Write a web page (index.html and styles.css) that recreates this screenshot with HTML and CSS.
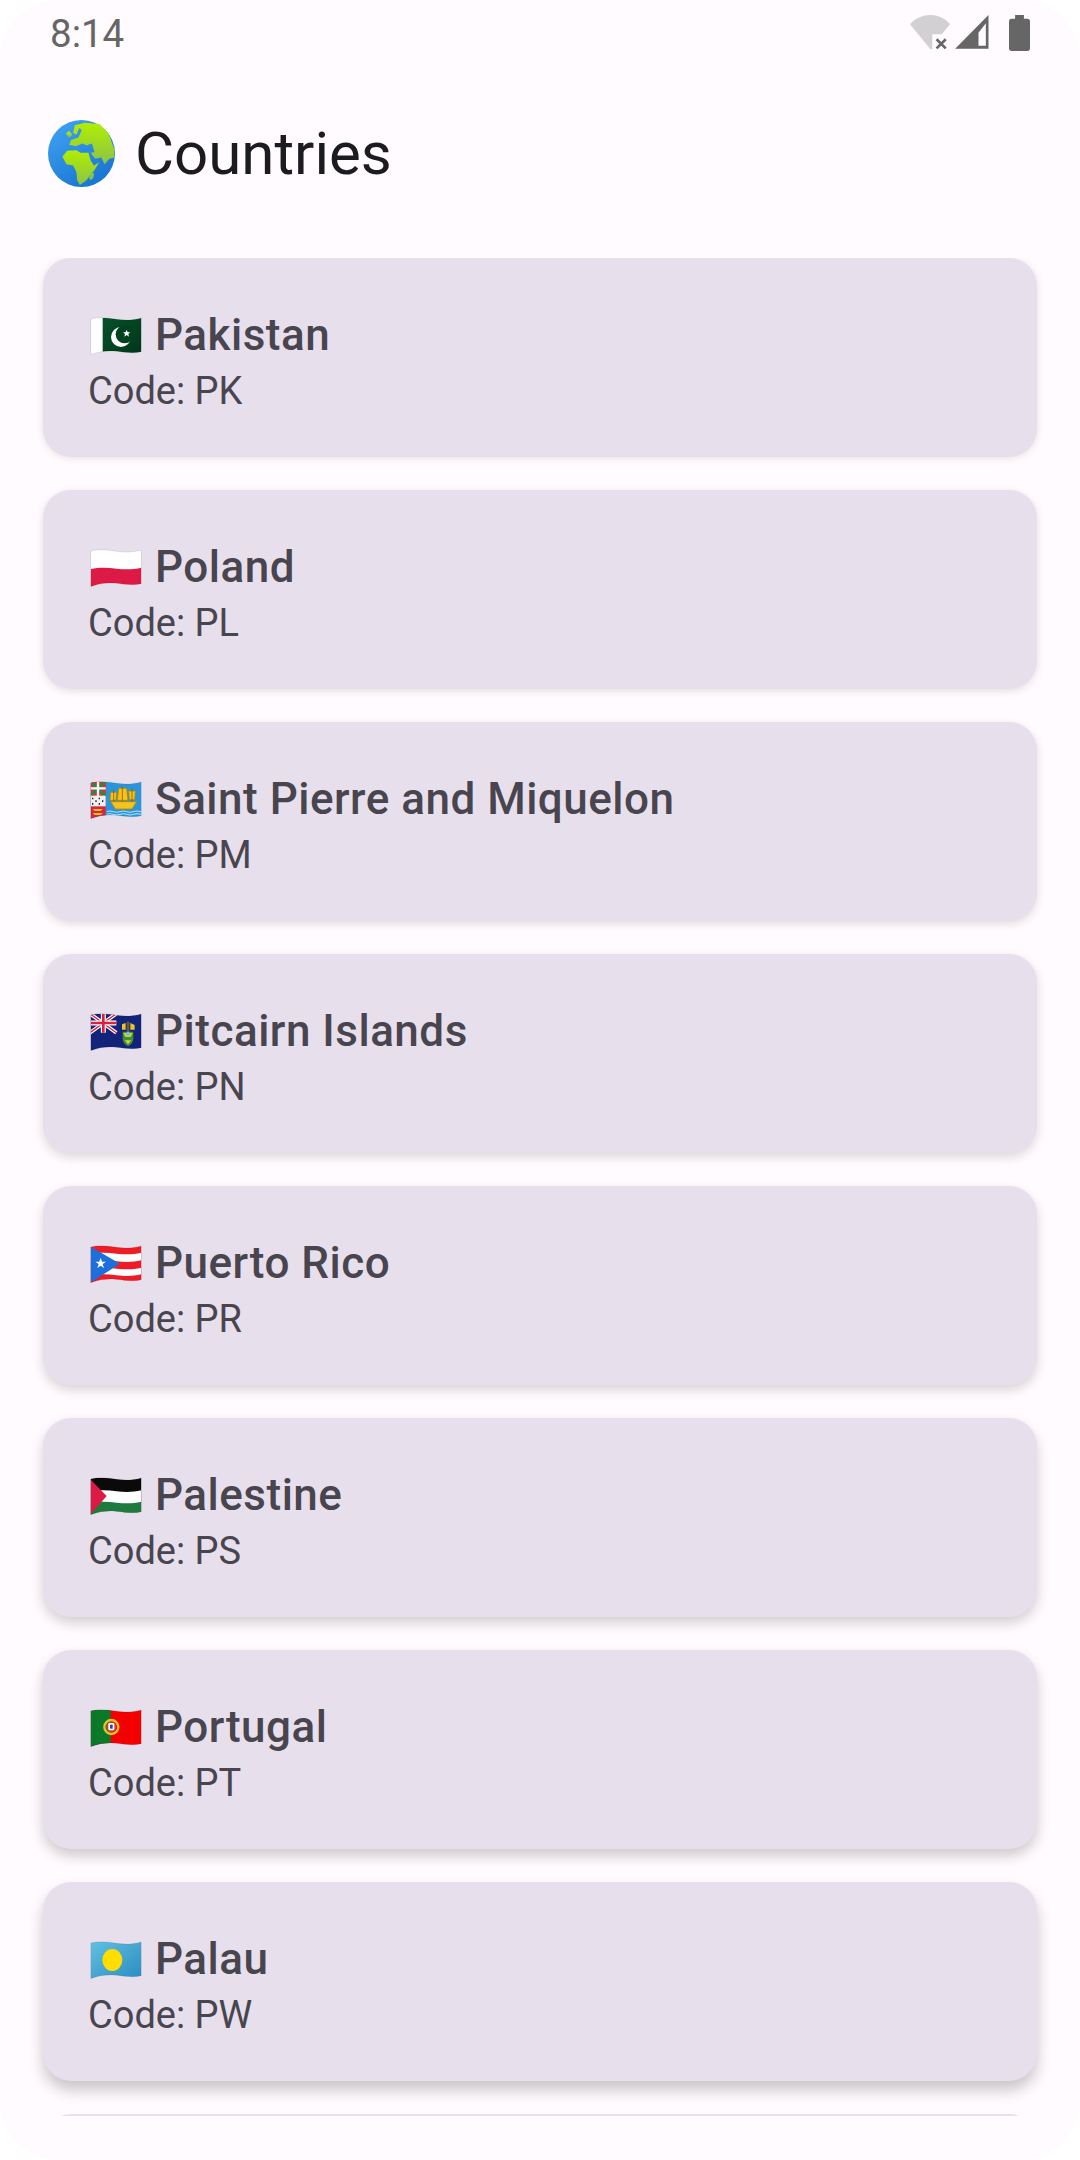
FILE: index.html
```html
<!DOCTYPE html>
<html lang="en">
<head>
<meta charset="utf-8">
<title>Countries</title>
<link rel="stylesheet" href="styles.css">
</head>
<body>
<svg class="defs" width="0" height="0" aria-hidden="true">
  <defs>
    <clipPath id="wave"><path d="M2 6C30 -1 55 3 80 7S130 10 154 3V104C130 110 105 106 80 103S30 102 2 113Z"/></clipPath>
    <path id="edge" d="M2 6C30 -1 55 3 80 7S130 10 154 3V104C130 110 105 106 80 103S30 102 2 113Z" fill="none" stroke="#000" stroke-opacity=".14" stroke-width="2"/>
    <linearGradient id="ocean" x1="0" y1="0" x2=".6" y2="1"><stop offset="0" stop-color="#42a5f5"/><stop offset="1" stop-color="#1976d2"/></linearGradient>
    <linearGradient id="land" x1="0" y1="0" x2="0" y2="1"><stop offset="0" stop-color="#b2ee00"/><stop offset="1" stop-color="#8bc34a"/></linearGradient>
    <linearGradient id="palau" x1="0" y1="0" x2="1" y2="1"><stop offset="0" stop-color="#62c1e2"/><stop offset="1" stop-color="#2a8cc2"/></linearGradient>
    <linearGradient id="pkgreen" x1="0" y1="0" x2="1" y2="1"><stop offset="0" stop-color="#06522a"/><stop offset="1" stop-color="#01351a"/></linearGradient>
  </defs>
</svg>
<div class="screen">
  <header class="status">
    <span class="clock">8:14</span>
    <div class="status-icons">
      <svg class="ic-wifi" viewBox="150 45 125 105"><path d="M150 72C185 35 240 35 272 72L247 103H218V148H212Z" fill="#d2d0d2"/><path d="M231 118L259 146M259 118L231 146" stroke="#666" stroke-width="8" fill="none"/></svg>
      <svg class="ic-cell" viewBox="285 47 101 102"><path d="M285 148L385 47V148Z" fill="#666"/><path d="M355 100L377 72V139H355Z" fill="#fffbfe"/></svg>
      <svg class="ic-batt" viewBox="448 46 62 106"><path d="M466 46H492V57H502Q510 57 510 65V144Q510 152 502 152H456Q448 152 448 144V65Q448 57 456 57H466Z" fill="#666"/></svg>
    </div>
  </header>

  <h1 class="page-title">
    <svg class="globe" viewBox="55 60 200 200">
      <circle cx="155" cy="160" r="100" fill="url(#ocean)"/>
      <path d="M135 76L165 68L208 72L236 100L253 148L253 172L238 176L224 192L214 172L196 176L182 158L194 156L186 130L170 136L158 130L138 138L118 134L124 120L146 112L156 90L148 84L140 104L130 98Z" fill="url(#land)"/>
      <path d="M108 100L118 92L128 104L118 112Z" fill="url(#land)"/>
      <path d="M98 170L112 152L140 150L152 158L176 158L182 180L192 196L208 186L192 212L180 226L170 240L150 254L142 240L140 216L130 196L110 192Z" fill="url(#land)"/>
      <ellipse cx="185" cy="228" rx="6" ry="11" fill="#8bc34a" transform="rotate(20 185 228)"/>
    </svg>
    <span>Countries</span>
  </h1>

  <main class="list">
    <article class="card">
      <div class="name">
        <svg class="flag" viewBox="0 0 156 114"><g clip-path="url(#wave)"><rect width="156" height="114" fill="#fff"/><rect x="38" width="118" height="114" fill="url(#pkgreen)"/><circle cx="93" cy="60" r="30" fill="#fff"/><circle cx="104" cy="52" r="27" fill="#03421f"/><path d="M110 38L113 46L121 46L115 51L117 59L110 54L103 59L105 51L99 46L107 46Z" fill="#fff"/></g><use href="#edge"/></svg>
        <span>Pakistan</span>
      </div>
      <p class="code">Code: PK</p>
    </article>

    <article class="card">
      <div class="name">
        <svg class="flag" viewBox="0 0 156 114"><g clip-path="url(#wave)"><rect width="156" height="114" fill="#fff"/><path d="M2 60C30 54 55 56 80 59S130 62 154 56L156 120H0Z" fill="#dc1a45"/></g><use href="#edge"/></svg>
        <span>Poland</span>
      </div>
      <p class="code">Code: PL</p>
    </article>

    <article class="card">
      <div class="name">
        <svg class="flag" viewBox="0 0 156 114"><g clip-path="url(#wave)">
          <rect width="156" height="114" fill="#2a95dc"/>
          <rect width="47" height="114" fill="#d7263d"/>
          <rect y="0" width="47" height="45" fill="#d33"/>
          <path d="M0 0L47 45M47 0L0 45" stroke="#1a8f4a" stroke-width="8"/>
          <path d="M24 0V45M0 22H47" stroke="#fff" stroke-width="7"/>
          <rect y="44" width="47" height="32" fill="#f1f1f1"/>
          <path d="M8 50v5M18 58v5M28 50v5M38 58v5M8 66v5M28 66v5" stroke="#222" stroke-width="4"/>
          <path d="M8 84H38L32 90H14ZM8 96H38L32 102H14Z" fill="#f4c020"/>
          <path d="M86 22H110L114 58H82ZM62 34H80L78 58H60ZM116 30H136L134 56H118ZM62 62H140L126 84H76Z" fill="#f6c21c" stroke="#b98600" stroke-width="2.5"/>
          <path d="M97 14V62M71 26V62M126 22V62" stroke="#8a6500" stroke-width="2.5"/>
          <path d="M50 92Q60 88 70 92T90 92T110 92T130 92T154 92M50 100Q60 96 70 100T90 100T110 100T130 100T154 100" stroke="#bfe3f7" stroke-width="3" fill="none"/>
        </g><use href="#edge"/></svg>
        <span>Saint Pierre and Miquelon</span>
      </div>
      <p class="code">Code: PM</p>
    </article>

    <article class="card">
      <div class="name">
        <svg class="flag" viewBox="0 0 156 114"><g clip-path="url(#wave)">
          <rect width="156" height="114" fill="#14237a"/>
          <path d="M0 2L79 59M79 2L0 59" stroke="#fff" stroke-width="11"/>
          <path d="M0 2L79 59M79 2L0 59" stroke="#d8213f" stroke-width="4"/>
          <path d="M40 0V59M0 30H79" stroke="#fff" stroke-width="15"/>
          <path d="M40 0V59M0 30H79" stroke="#d8213f" stroke-width="8"/>
          <path d="M98 56H130V76Q130 92 114 100Q98 92 98 76Z" fill="#3f8f3a"/>
          <rect x="110" y="26" width="8" height="40" fill="#6e5a3a"/>
          <path d="M96 34L107 30V50L96 50ZM121 30L134 36V50H121Z" fill="#e6c624"/>
          <path d="M100 60H128L122 72H106ZM104 82H124L114 94Z" fill="#d8d030"/>
          <circle cx="114" cy="62" r="6" fill="#6fc0df"/>
        </g><use href="#edge"/></svg>
        <span>Pitcairn Islands</span>
      </div>
      <p class="code">Code: PN</p>
    </article>

    <article class="card">
      <div class="name">
        <svg class="flag" viewBox="0 0 156 114"><g clip-path="url(#wave)">
          <rect width="156" height="114" fill="#ee1c25"/>
          <path d="M2 27C30 21 55 23 80 26S130 29 154 23L156 120H0Z" fill="#fff"/>
          <path d="M2 50C30 44 55 46 80 49S130 52 154 46L156 120H0Z" fill="#ee1c25"/>
          <path d="M2 72C30 66 55 68 80 71S130 74 154 68L156 120H0Z" fill="#fff"/>
          <path d="M2 92C30 86 55 88 80 91S130 94 154 88L156 120H0Z" fill="#ee1c25"/>
          <path d="M0 4L90 56L0 114Z" fill="#1e6fd9"/>
          <path d="M32 38L36 50L48 50L38 57L42 69L32 62L22 69L26 57L16 50L28 50Z" fill="#fff"/>
        </g><use href="#edge"/></svg>
        <span>Puerto Rico</span>
      </div>
      <p class="code">Code: PR</p>
    </article>

    <article class="card">
      <div class="name">
        <svg class="flag" viewBox="0 0 156 114"><g clip-path="url(#wave)">
          <rect width="156" height="114" fill="#0a0a0a"/>
          <path d="M2 44C30 38 55 40 80 43S130 46 154 40L156 120H0Z" fill="#fff"/>
          <path d="M2 78C30 72 55 74 80 77S130 80 154 74L156 120H0Z" fill="#1f7a3d"/>
          <path d="M0 6L50 57L0 114Z" fill="#dc1a45"/>
        </g><use href="#edge"/></svg>
        <span>Palestine</span>
      </div>
      <p class="code">Code: PS</p>
    </article>

    <article class="card">
      <div class="name">
        <svg class="flag" viewBox="0 0 156 114"><g clip-path="url(#wave)">
          <rect width="156" height="114" fill="#f40000"/>
          <rect width="62" height="114" fill="#0a7a2a"/>
          <circle cx="64" cy="54" r="21" fill="none" stroke="#e3c626" stroke-width="7"/>
          <circle cx="64" cy="54" r="15" fill="#e53935"/>
          <rect x="55" y="42" width="18" height="22" rx="4" fill="#fff"/>
          <rect x="60" y="47" width="8" height="12" fill="#2746a8"/>
        </g><use href="#edge"/></svg>
        <span>Portugal</span>
      </div>
      <p class="code">Code: PT</p>
    </article>

    <article class="card">
      <div class="name">
        <svg class="flag" viewBox="0 0 156 114"><g clip-path="url(#wave)">
          <rect width="156" height="114" fill="url(#palau)"/>
          <ellipse cx="67" cy="57" rx="30" ry="33" fill="#ffdd00"/>
        </g><use href="#edge"/></svg>
        <span>Palau</span>
      </div>
      <p class="code">Code: PW</p>
    </article>

    <article class="card"></article>
  </main>
</div>
</body>
</html>
```
FILE: styles.css
```css
* { box-sizing: border-box; }
html, body { margin: 0; padding: 0; background: #fff; }
body { width: 1080px; height: 2160px; overflow: hidden; font-family: Roboto, "Liberation Sans", sans-serif; }
.defs { display: block; width: 0; height: 0; }

.screen {
  width: 1080px;
  height: 2160px;
  background: #fffbfe;
  border-radius: 60px;
  display: flex;
  flex-direction: column;
}

.status {
  height: 66px;
  padding: 11px 50px 0 50px;
  display: flex;
  justify-content: space-between;
  align-items: flex-start;
  flex: none;
}
.clock { font-size: 38.5px; line-height: 46px; color: #666; }
.status-icons { display: flex; align-items: flex-start; padding-top: 4px; }
.ic-wifi { width: 41px; height: 35px; display: block; }
.ic-cell { width: 34px; height: 34px; display: block; margin-left: 4px; }
.ic-batt { width: 21px; height: 36px; display: block; margin-left: 20px; }

.page-title {
  margin: 0;
  height: 192px;
  padding: 54px 44px 0 48px;
  display: flex;
  align-items: flex-start;
  gap: 20px;
  font-size: 60px;
  line-height: 68px;
  font-weight: 400;
  color: #1c1b1f;
  flex: none;
}
.globe { width: 67px; height: 67px; display: block; flex: none; }

.list {
  height: 1858px;
  overflow: hidden;
  padding: 0 43px;
  display: flex;
  flex-direction: column;
  gap: 33px;
  flex: none;
}
.card {
  height: 199px;
  flex: none;
  padding: 49px 44px 0 45px;
  background: #e7e0ec;
  border-radius: 28px;
}
.card:nth-child(1) { box-shadow: 0 1px 9px rgba(0,0,0,.11); }
.card:nth-child(2) { box-shadow: 0 2px 9px rgba(0,0,0,.12); }
.card:nth-child(3) { box-shadow: 0 3px 10px rgba(0,0,0,.13); }
.card:nth-child(4) { box-shadow: 0 4px 11px rgba(0,0,0,.15); }
.card:nth-child(5) { box-shadow: 0 5px 12px rgba(0,0,0,.16); }
.card:nth-child(6) { box-shadow: 0 6px 13px rgba(0,0,0,.18); }
.card:nth-child(7) { box-shadow: 0 7px 14px rgba(0,0,0,.20); }
.card:nth-child(8) { box-shadow: 0 9px 15px rgba(0,0,0,.22); }

.name {
  display: flex;
  align-items: center;
  gap: 13px;
  height: 57px;
  font-size: 44px;
  line-height: 57px;
  font-weight: 500;
  letter-spacing: .5px;
  color: #49454f;
}
.flag { width: 52px; height: 38px; display: block; flex: none; margin-left: 2px; }
.code {
  margin: 0;
  font-size: 38px;
  line-height: 54px;
  color: #49454f;
}
```
